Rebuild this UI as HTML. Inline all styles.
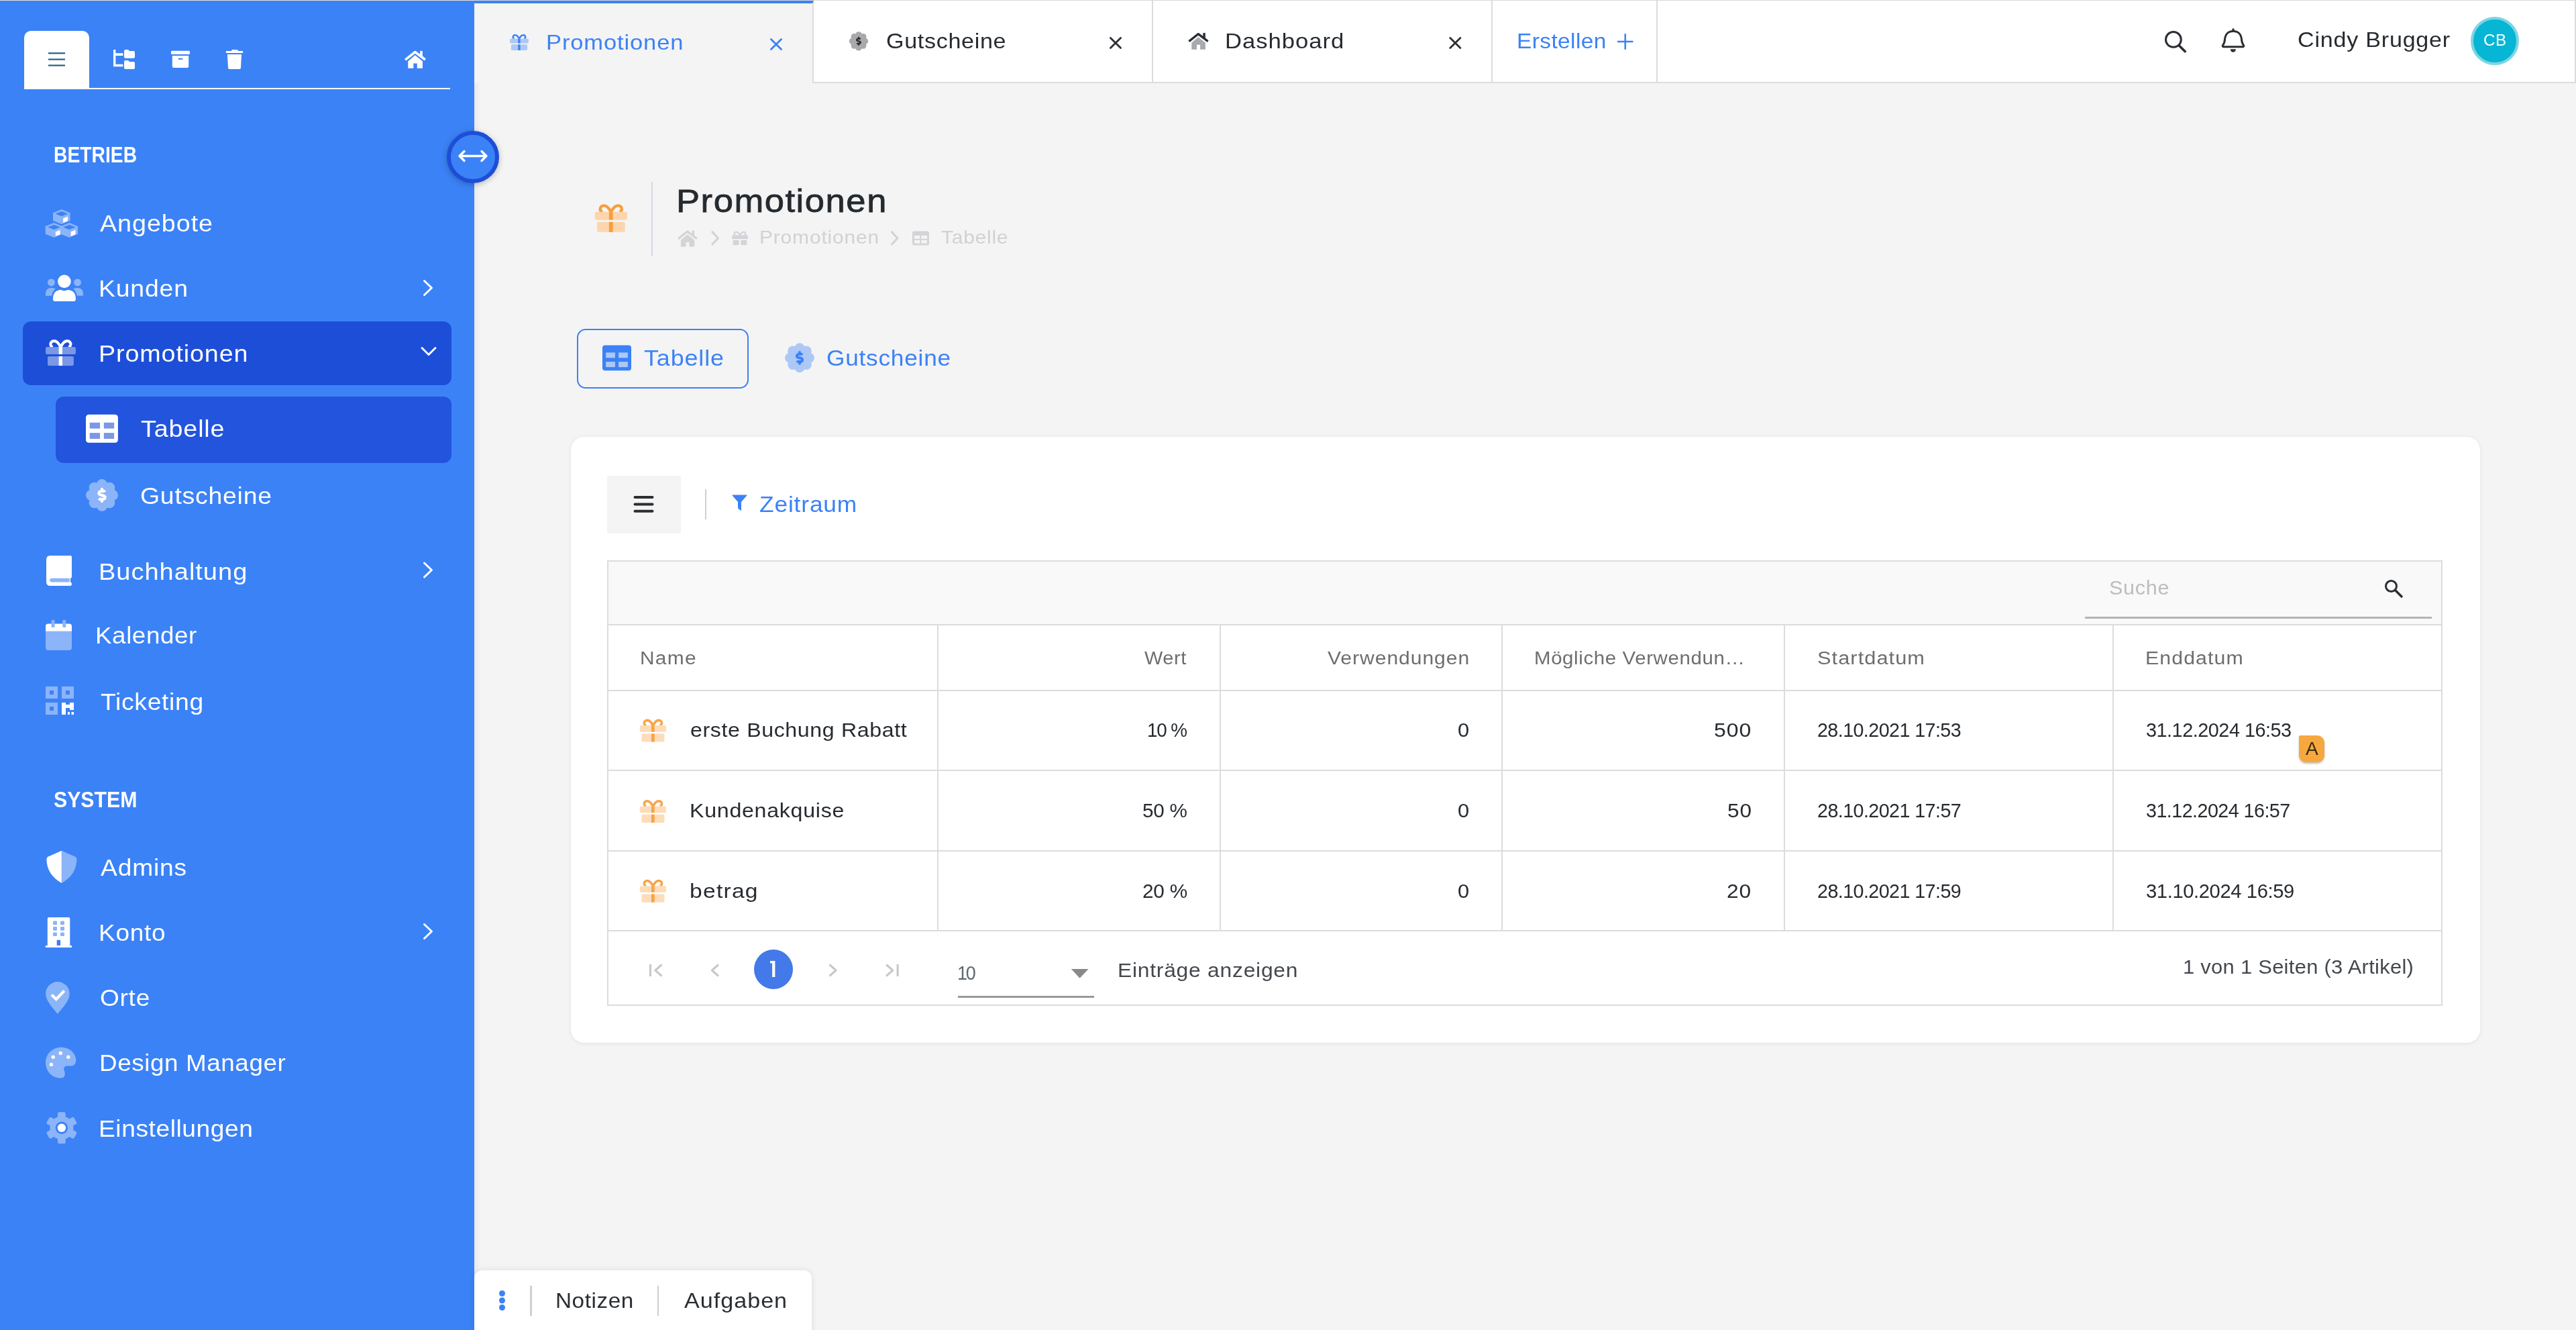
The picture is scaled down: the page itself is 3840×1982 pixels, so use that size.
<!DOCTYPE html><html><head><meta charset="utf-8"><style>
html,body{margin:0;padding:0}
body{width:3840px;height:1982px;overflow:hidden;position:relative;background:#f4f4f4;font-family:"Liberation Sans",sans-serif}
.t{position:absolute;white-space:nowrap;transform-origin:0 0}
svg{display:block}
</style></head><body>
<div style="position:absolute;left:0px;top:0px;width:707px;height:1982px;background:#3b82f6;box-shadow:2px 0 10px rgba(0,0,0,0.07)"></div>
<div style="position:absolute;left:0px;top:0px;width:3840px;height:1px;background:#e6e0d6"></div>
<div style="position:absolute;left:36px;top:46px;width:97px;height:87px;background:#fff;border-radius:10px 10px 0 0"></div>
<div style="position:absolute;left:36px;top:131px;width:635px;height:2px;background:#fff"></div>
<div style="position:absolute;left:34px;top:479px;width:639px;height:95px;background:#1d4ed8;border-radius:12px"></div>
<div style="position:absolute;left:83px;top:591px;width:590px;height:99px;background:#2254dd;border-radius:12px"></div>
<div class="t" style="left:79.67px;top:213.87px;font-size:33.00px;line-height:33.00px;letter-spacing:0.000px;transform:scaleX(0.8567);color:#fff;font-weight:700;">BETRIEB</div>
<div class="t" style="left:80.08px;top:1175.07px;font-size:33.00px;line-height:33.00px;letter-spacing:0.000px;transform:scaleX(0.9170);color:#fff;font-weight:700;">SYSTEM</div>
<div class="t" style="left:149.47px;top:315.02px;font-size:35.30px;line-height:35.30px;letter-spacing:0.897px;transform:scaleX(1.0673);color:#fff;font-weight:400;">Angebote</div>
<div class="t" style="left:147.16px;top:412.12px;font-size:35.30px;line-height:35.30px;letter-spacing:0.827px;transform:scaleX(1.0563);color:#fff;font-weight:400;">Kunden</div>
<div class="t" style="left:147.43px;top:508.72px;font-size:35.30px;line-height:35.30px;letter-spacing:0.822px;transform:scaleX(1.0676);color:#fff;font-weight:400;">Promotionen</div>
<div class="t" style="left:209.80px;top:621.12px;font-size:35.30px;line-height:35.30px;letter-spacing:0.781px;transform:scaleX(1.0687);color:#fff;font-weight:400;">Tabelle</div>
<div class="t" style="left:208.75px;top:720.82px;font-size:35.30px;line-height:35.30px;letter-spacing:0.722px;transform:scaleX(1.0590);color:#fff;font-weight:400;">Gutscheine</div>
<div class="t" style="left:147.40px;top:833.62px;font-size:35.30px;line-height:35.30px;letter-spacing:0.914px;transform:scaleX(1.0774);color:#fff;font-weight:400;">Buchhaltung</div>
<div class="t" style="left:141.60px;top:928.72px;font-size:35.30px;line-height:35.30px;letter-spacing:0.536px;transform:scaleX(1.0426);color:#fff;font-weight:400;">Kalender</div>
<div class="t" style="left:149.71px;top:1027.52px;font-size:35.30px;line-height:35.30px;letter-spacing:0.617px;transform:scaleX(1.0573);color:#fff;font-weight:400;">Ticketing</div>
<div class="t" style="left:150.37px;top:1275.12px;font-size:35.30px;line-height:35.30px;letter-spacing:0.788px;transform:scaleX(1.0536);color:#fff;font-weight:400;">Admins</div>
<div class="t" style="left:147.48px;top:1371.82px;font-size:35.30px;line-height:35.30px;letter-spacing:0.691px;transform:scaleX(1.0496);color:#fff;font-weight:400;">Konto</div>
<div class="t" style="left:148.79px;top:1468.82px;font-size:35.30px;line-height:35.30px;letter-spacing:0.689px;transform:scaleX(1.0498);color:#fff;font-weight:400;">Orte</div>
<div class="t" style="left:147.50px;top:1565.82px;font-size:35.30px;line-height:35.30px;letter-spacing:0.550px;transform:scaleX(1.0439);color:#fff;font-weight:400;">Design Manager</div>
<div class="t" style="left:147.48px;top:1663.62px;font-size:35.30px;line-height:35.30px;letter-spacing:0.561px;transform:scaleX(1.0514);color:#fff;font-weight:400;">Einstellungen</div>
<div style="position:absolute;left:707px;top:0px;width:3133px;height:124px;background:#fff;box-sizing:border-box;border-top:1px solid #d9d9d9;border-bottom:2px solid #dcdcdc;border-right:2px solid #dcdcdc"></div>
<div style="position:absolute;left:707px;top:1px;width:506px;height:123px;background:#f4f4f4;box-sizing:border-box;border-top:4px solid #3b82f6;border-right:2px solid #dcdcdc"></div>
<div style="position:absolute;left:1717px;top:0px;width:2px;height:124px;background:#dcdcdc"></div>
<div style="position:absolute;left:2223px;top:0px;width:2px;height:124px;background:#dcdcdc"></div>
<div style="position:absolute;left:2469px;top:0px;width:2px;height:124px;background:#dcdcdc"></div>
<div class="t" style="left:813.98px;top:46.54px;font-size:32.20px;line-height:32.20px;letter-spacing:0.805px;transform:scaleX(1.0727);color:#3b82f6;font-weight:400;">Promotionen</div>
<div class="t" style="left:1320.58px;top:44.74px;font-size:32.20px;line-height:32.20px;letter-spacing:0.654px;transform:scaleX(1.0584);color:#272b30;font-weight:400;">Gutscheine</div>
<div class="t" style="left:1825.97px;top:44.54px;font-size:32.20px;line-height:32.20px;letter-spacing:0.909px;transform:scaleX(1.0767);color:#272b30;font-weight:400;">Dashboard</div>
<div class="t" style="left:2261.07px;top:44.54px;font-size:32.20px;line-height:32.20px;letter-spacing:0.382px;transform:scaleX(1.0395);color:#3b82f6;font-weight:400;">Erstellen</div>
<div class="t" style="left:3425.26px;top:43.78px;font-size:31.80px;line-height:31.80px;letter-spacing:0.739px;transform:scaleX(1.0710);color:#272b30;font-weight:400;">Cindy Brugger</div>
<div style="position:absolute;left:3683px;top:25px;width:72px;height:72px;background:#06b6d4;border-radius:50%;box-sizing:border-box;border:4px solid #7fd4e4"></div>
<div class="t" style="left:3702.02px;top:48.84px;font-size:23.70px;line-height:23.70px;letter-spacing:0.469px;transform:scaleX(1.0236);color:#fff;font-weight:400;">CB</div>
<div style="position:absolute;left:971px;top:271px;width:2px;height:111px;background:#d3dae3"></div>
<div class="t" style="left:1007.66px;top:274.93px;font-size:48.40px;line-height:48.40px;letter-spacing:1.413px;transform:scaleX(1.0862);color:#252a2f;font-weight:400;-webkit-text-stroke:0.8px #252a2f;">Promotionen</div>
<div class="t" style="left:1132.27px;top:340.37px;font-size:27.80px;line-height:27.80px;letter-spacing:0.750px;transform:scaleX(1.0793);color:#d1d1d6;font-weight:400;">Promotionen</div>
<div class="t" style="left:1403.13px;top:340.37px;font-size:27.80px;line-height:27.80px;letter-spacing:0.697px;transform:scaleX(1.0785);color:#d1d1d6;font-weight:400;">Tabelle</div>
<div style="position:absolute;left:860px;top:490px;width:256px;height:89px;box-sizing:border-box;border:2px solid #3b82f6;border-radius:13px"></div>
<div class="t" style="left:959.59px;top:516.60px;font-size:33.20px;line-height:33.20px;letter-spacing:0.844px;transform:scaleX(1.0796);color:#3b82f6;font-weight:400;">Tabelle</div>
<div class="t" style="left:1232.07px;top:516.60px;font-size:33.20px;line-height:33.20px;letter-spacing:0.715px;transform:scaleX(1.0620);color:#3b82f6;font-weight:400;">Gutscheine</div>
<div style="position:absolute;left:851px;top:651px;width:2846px;height:903px;background:#fff;border-radius:20px;box-shadow:0 1px 6px rgba(0,0,0,0.08)"></div>
<div style="position:absolute;left:905px;top:709px;width:110px;height:86px;background:#f4f4f4"></div>
<div style="position:absolute;left:1051px;top:729px;width:2px;height:45px;background:#cfcfcf"></div>
<div class="t" style="left:1131.93px;top:734.77px;font-size:33.00px;line-height:33.00px;letter-spacing:0.794px;transform:scaleX(1.0702);color:#3b82f6;font-weight:400;">Zeitraum</div>
<div style="position:absolute;left:905px;top:835px;width:2736px;height:664px;box-sizing:border-box;border:2px solid #dcdcdc"></div>
<div style="position:absolute;left:907px;top:837px;width:2732px;height:95px;background:#f9f9f9"></div>
<div style="position:absolute;left:907px;top:930px;width:2732px;height:2px;background:#dcdcdc"></div>
<div style="position:absolute;left:3108px;top:919px;width:517px;height:3px;background:#b5b5b5"></div>
<div class="t" style="left:3144.35px;top:862.05px;font-size:29.00px;line-height:29.00px;letter-spacing:0.672px;transform:scaleX(1.0533);color:#bdbdbd;font-weight:400;">Suche</div>
<div style="position:absolute;left:1397px;top:932px;width:2px;height:455px;background:#dcdcdc"></div>
<div style="position:absolute;left:1818px;top:932px;width:2px;height:455px;background:#dcdcdc"></div>
<div style="position:absolute;left:2238px;top:932px;width:2px;height:455px;background:#dcdcdc"></div>
<div style="position:absolute;left:2659px;top:932px;width:2px;height:455px;background:#dcdcdc"></div>
<div style="position:absolute;left:3149px;top:932px;width:2px;height:455px;background:#dcdcdc"></div>
<div style="position:absolute;left:907px;top:1028px;width:2732px;height:2px;background:#dcdcdc"></div>
<div style="position:absolute;left:907px;top:1147px;width:2732px;height:2px;background:#dcdcdc"></div>
<div style="position:absolute;left:907px;top:1267px;width:2732px;height:2px;background:#dcdcdc"></div>
<div style="position:absolute;left:907px;top:1386px;width:2732px;height:2px;background:#dcdcdc"></div>
<div class="t" style="left:953.97px;top:967.45px;font-size:27.70px;line-height:27.70px;letter-spacing:1.169px;transform:scaleX(1.0805);color:#6e6e6e;font-weight:400;">Name</div>
<div class="t" style="left:1706.17px;top:967.45px;font-size:27.70px;line-height:27.70px;letter-spacing:0.543px;transform:scaleX(1.0442);color:#6e6e6e;font-weight:400;">Wert</div>
<div class="t" style="left:1979.26px;top:967.45px;font-size:27.70px;line-height:27.70px;letter-spacing:0.882px;transform:scaleX(1.0863);color:#6e6e6e;font-weight:400;">Verwendungen</div>
<div class="t" style="left:2286.81px;top:967.45px;font-size:27.70px;line-height:27.70px;letter-spacing:0.601px;transform:scaleX(1.0617);color:#6e6e6e;font-weight:400;">Mögliche Verwendun…</div>
<div class="t" style="left:2708.81px;top:967.45px;font-size:27.70px;line-height:27.70px;letter-spacing:0.969px;transform:scaleX(1.1094);color:#6e6e6e;font-weight:400;">Startdatum</div>
<div class="t" style="left:3198.34px;top:967.45px;font-size:27.70px;line-height:27.70px;letter-spacing:0.999px;transform:scaleX(1.0938);color:#6e6e6e;font-weight:400;">Enddatum</div>
<div class="t" style="left:1029.27px;top:1073.34px;font-size:30.20px;line-height:30.20px;letter-spacing:0.607px;transform:scaleX(1.0631);color:#272b30;font-weight:400;">erste Buchung Rabatt</div>
<div class="t" style="left:1709.72px;top:1073.34px;font-size:30.20px;line-height:30.20px;letter-spacing:-1.217px;transform:scaleX(0.9230);color:#272b30;font-weight:400;">10 %</div>
<div class="t" style="left:2172.85px;top:1073.34px;font-size:30.20px;line-height:30.20px;letter-spacing:0.000px;transform:scaleX(1.0207);color:#272b30;font-weight:400;">0</div>
<div class="t" style="left:2555.48px;top:1073.34px;font-size:30.20px;line-height:30.20px;letter-spacing:0.888px;transform:scaleX(1.0587);color:#272b30;font-weight:400;">500</div>
<div class="t" style="left:2708.78px;top:1073.34px;font-size:30.20px;line-height:30.20px;letter-spacing:-0.572px;transform:scaleX(0.9476);color:#272b30;font-weight:400;">28.10.2021 17:53</div>
<div class="t" style="left:3199.23px;top:1073.34px;font-size:30.20px;line-height:30.20px;letter-spacing:-0.497px;transform:scaleX(0.9542);color:#272b30;font-weight:400;">31.12.2024 16:53</div>
<div class="t" style="left:1027.94px;top:1193.04px;font-size:30.20px;line-height:30.20px;letter-spacing:0.690px;transform:scaleX(1.0646);color:#272b30;font-weight:400;">Kundenakquise</div>
<div class="t" style="left:1703.07px;top:1193.04px;font-size:30.20px;line-height:30.20px;letter-spacing:-0.261px;transform:scaleX(0.9827);color:#272b30;font-weight:400;">50 %</div>
<div class="t" style="left:2172.85px;top:1193.04px;font-size:30.20px;line-height:30.20px;letter-spacing:0.000px;transform:scaleX(1.0207);color:#272b30;font-weight:400;">0</div>
<div class="t" style="left:2574.70px;top:1193.04px;font-size:30.20px;line-height:30.20px;letter-spacing:0.863px;transform:scaleX(1.0432);color:#272b30;font-weight:400;">50</div>
<div class="t" style="left:2708.78px;top:1193.04px;font-size:30.20px;line-height:30.20px;letter-spacing:-0.568px;transform:scaleX(0.9479);color:#272b30;font-weight:400;">28.10.2021 17:57</div>
<div class="t" style="left:3199.23px;top:1193.04px;font-size:30.20px;line-height:30.20px;letter-spacing:-0.553px;transform:scaleX(0.9493);color:#272b30;font-weight:400;">31.12.2024 16:57</div>
<div class="t" style="left:1028.37px;top:1312.64px;font-size:30.20px;line-height:30.20px;letter-spacing:1.115px;transform:scaleX(1.1138);color:#272b30;font-weight:400;">betrag</div>
<div class="t" style="left:1702.82px;top:1312.64px;font-size:30.20px;line-height:30.20px;letter-spacing:-0.227px;transform:scaleX(0.9849);color:#272b30;font-weight:400;">20 %</div>
<div class="t" style="left:2172.85px;top:1312.64px;font-size:30.20px;line-height:30.20px;letter-spacing:0.000px;transform:scaleX(1.0207);color:#272b30;font-weight:400;">0</div>
<div class="t" style="left:2574.43px;top:1312.64px;font-size:30.20px;line-height:30.20px;letter-spacing:0.954px;transform:scaleX(1.0484);color:#272b30;font-weight:400;">20</div>
<div class="t" style="left:2708.78px;top:1312.64px;font-size:30.20px;line-height:30.20px;letter-spacing:-0.568px;transform:scaleX(0.9479);color:#272b30;font-weight:400;">28.10.2021 17:59</div>
<div class="t" style="left:3199.21px;top:1312.64px;font-size:30.20px;line-height:30.20px;letter-spacing:-0.378px;transform:scaleX(0.9648);color:#272b30;font-weight:400;">31.10.2024 16:59</div>
<div style="position:absolute;left:3427px;top:1096px;width:38px;height:40px;background:#f6a83f;border-radius:2px 11px 11px 11px;box-shadow:0 2px 3px rgba(0,0,0,0.25)"></div>
<div class="t" style="left:3436.57px;top:1102.00px;font-size:28.00px;line-height:28.00px;letter-spacing:0.000px;transform:scaleX(1.0032);color:#3a2a10;font-weight:400;">A</div>
<div style="position:absolute;left:1124px;top:1415px;width:58px;height:59px;background:#4479e9;border-radius:50%"></div>
<div style="position:absolute;left:1428px;top:1484px;width:203px;height:3px;background:#9a9a9a"></div>
<div class="t" style="left:1426.99px;top:1435.14px;font-size:30.20px;line-height:30.20px;letter-spacing:-2.444px;transform:scaleX(0.8919);color:#5f6870;font-weight:400;">10</div>
<div class="t" style="left:1666.14px;top:1430.93px;font-size:29.50px;line-height:29.50px;letter-spacing:0.703px;transform:scaleX(1.0779);color:#44484d;font-weight:400;">Einträge anzeigen</div>
<div class="t" style="left:3254.47px;top:1426.37px;font-size:29.80px;line-height:29.80px;letter-spacing:0.295px;transform:scaleX(1.0358);color:#44484d;font-weight:400;">1 von 1 Seiten (3 Artikel)</div>
<div style="position:absolute;left:707px;top:1893px;width:503px;height:120px;background:#fff;border-radius:12px;box-shadow:0 0 10px rgba(0,0,0,0.1)"></div>
<div style="position:absolute;left:790px;top:1916px;width:3px;height:45px;background:#cfcfcf"></div>
<div style="position:absolute;left:980px;top:1916px;width:2px;height:45px;background:#cfcfcf"></div>
<div class="t" style="left:828.24px;top:1922.95px;font-size:31.60px;line-height:31.60px;letter-spacing:0.570px;transform:scaleX(1.0527);color:#2a2e33;font-weight:400;">Notizen</div>
<div class="t" style="left:1020.47px;top:1922.95px;font-size:31.60px;line-height:31.60px;letter-spacing:0.934px;transform:scaleX(1.0795);color:#2a2e33;font-weight:400;">Aufgaben</div>
<svg style="position:absolute;left:0;top:0" width="3840" height="1982" viewBox="0 0 3840 1982">
<line x1="72" y1="79.3" x2="97" y2="79.3" stroke="#1f6381" stroke-width="2.2"/>
<line x1="72" y1="88.5" x2="97" y2="88.5" stroke="#1f6381" stroke-width="2.2"/>
<line x1="72" y1="97.5" x2="97" y2="97.5" stroke="#1f6381" stroke-width="2.2"/>
<path d="M169,74 h3.4 v5.2 h11 v3.7 h-11 v12.9 h11 v3.5 h-14.4 Z" fill="#fff"/>
<path d="M185,76 q0,-2 2,-2 h4 l2,2 h6 q2,0 2,2 v6.7 q0,2 -2,2 h-12 q-2,0 -2,-2 Z" fill="#fff"/>
<path d="M185,92 q0,-2 2,-2 h4 l2,2 h6 q2,0 2,2 v6.9 q0,2 -2,2 h-12 q-2,0 -2,-2 Z" fill="#fff"/>
<rect x="255" y="75.8" width="28" height="5.2" rx="1.2" fill="#fff"/>
<path d="M256.8,83 h24.4 v16 q0,2 -2,2 h-20.4 q-2,0 -2,-2 Z" fill="#fff"/>
<rect x="265.5" y="86.8" width="7" height="1.9" rx="0.9" fill="#3b82f6"/>
<path d="M337,76 h7.9 l1,-2 h8.2 l1,2 h7 v3.1 h-25.1 Z" fill="#fff"/>
<path d="M338.9,81 h21.1 l-1,20 q-0.1,2 -2,2 h-15 q-1.9,0 -2,-2 Z" fill="#fff"/>
<g transform="translate(603.00,75.90) scale(0.3200)"><path d="M16.4,48 L49.3,20 L84.2,48 L84.2,81 L58.6,81 L58.6,58.2 L41.8,58.2 L41.8,81 L16.4,81 Z" fill="#fff"/><path d="M3.5,41 L49.3,5 L96.5,41" fill="none" stroke="#fff" stroke-width="11" stroke-linejoin="round"/><rect x="72.4" y="0" width="11.5" height="26" fill="#fff"/></g>
<circle cx="705" cy="234" r="36" fill="#3b82f6" stroke="#1d4ed8" stroke-width="6" style="filter:drop-shadow(0 2px 4px rgba(0,0,0,0.25))"/>
<path d="M686,232.5 h38 M692,225.5 l-7,7 l7,7 M718,225.5 l7,7 l-7,7" fill="none" stroke="#fff" stroke-width="3.4" stroke-linecap="round" stroke-linejoin="round"/>
<path d="M91.8,312 L104.6,317.3 L104.6,328.7 L91.8,334 L79.0,328.7 L79.0,317.3 Z" fill="#8cb4f8" stroke="#8cb4f8" stroke-width="0" /><path d="M91.8,315 L101.1,318.6 L91.8,322.3 L82.5,318.6 Z" fill="#3b82f6"/><path d="M94.1,325.4 L101.0,322.6 L101.0,329.2 L94.1,332 Z" fill="#fff"/><path d="M80.5,332 L93.3,337.3 L93.3,348.7 L80.5,354 L67.7,348.7 L67.7,337.3 Z" fill="#8cb4f8" stroke="#8cb4f8" stroke-width="0" /><path d="M80.5,335 L89.8,338.6 L80.5,342.3 L71.2,338.6 Z" fill="#3b82f6"/><path d="M82.8,345.4 L89.7,342.6 L89.7,349.2 L82.8,352 Z" fill="#fff"/><path d="M103.3,332 L116.1,337.3 L116.1,348.7 L103.3,354 L90.5,348.7 L90.5,337.3 Z" fill="#8cb4f8" stroke="#8cb4f8" stroke-width="0" /><path d="M103.3,335 L112.6,338.6 L103.3,342.3 L94.0,338.6 Z" fill="#3b82f6"/><path d="M105.6,345.4 L112.5,342.6 L112.5,349.2 L105.6,352 Z" fill="#fff"/>
<circle cx="76.4" cy="420.9" r="5.5" fill="#8cb4f8"/><circle cx="115.5" cy="420.9" r="5.5" fill="#8cb4f8"/>
<path d="M68,440.7 v-3 q0,-8.7 8.7,-8.7 q3.5,0 6,1.2 q-4.5,3.8 -5.5,10.5 Z" fill="#8cb4f8"/>
<path d="M123.9,440.7 v-3 q0,-8.7 -8.7,-8.7 q-3.5,0 -6,1.2 q4.5,3.8 5.5,10.5 Z" fill="#8cb4f8"/>
<circle cx="95.9" cy="419.4" r="9.8" fill="#fff"/>
<path d="M79,446 q0,-14 12,-14 q2.5,1.2 4.9,1.2 q2.4,0 4.9,-1.2 q12.1,0 12.1,14 q0,3 -3,3 h-27.9 q-3,0 -3,-3 Z" fill="#fff"/>
<g transform="translate(68.00,505.90) scale(0.4490)"><path d="M49.9,25.5 C45,15 38,5 28,5 C20,5 16,11 16.5,17 C17,21 19.5,23.5 23,25.5 M49.9,25.5 C54.8,15 61.8,5 71.8,5 C79.8,5 83.8,11 83.3,17 C82.8,21 80.3,23.5 76.8,25.5" fill="none" stroke="#fff" stroke-width="9"/><rect x="0" y="24.7" width="100" height="24.5" rx="5" fill="#7b98e6"/><rect x="6.7" y="55.7" width="86.6" height="31.2" rx="5" fill="#7b98e6"/><rect x="43.8" y="24.7" width="11.8" height="24.5" fill="#fff"/><rect x="43.8" y="55.7" width="11.8" height="31.2" fill="#fff"/></g>
<path d="M632.5,418.5 L643.5,429 L632.5,439.5" fill="none" stroke="#fff" stroke-width="3" stroke-linecap="round" stroke-linejoin="round"/>
<path d="M632.5,839.0 L643.5,849.5 L632.5,860.0" fill="none" stroke="#fff" stroke-width="3" stroke-linecap="round" stroke-linejoin="round"/>
<path d="M632.5,1377.5 L643.5,1388 L632.5,1398.5" fill="none" stroke="#fff" stroke-width="3" stroke-linecap="round" stroke-linejoin="round"/>
<path d="M629,518.5 L639,528.5 L649,518.5" fill="none" stroke="#fff" stroke-width="3" stroke-linecap="round" stroke-linejoin="round"/>
<g transform="translate(128.00,617.80) scale(0.4790)"><rect x="0" y="0" width="100" height="87.5" rx="9" fill="#fff"/><rect x="12" y="25" width="32" height="18.5" fill="#7b97e6"/><rect x="12" y="57" width="32" height="18.5" fill="#7b97e6"/><rect x="56" y="25" width="32" height="18.5" fill="#7b97e6"/><rect x="56" y="57" width="32" height="18.5" fill="#7b97e6"/></g>
<g transform="translate(152.00,738.00) scale(0.4800)" fill="#8cb4f8"><circle cx="0" cy="0" r="37"/><circle cx="0.00" cy="-33.00" r="17"/><circle cx="23.33" cy="-23.33" r="17"/><circle cx="33.00" cy="0.00" r="17"/><circle cx="23.33" cy="23.33" r="17"/><circle cx="0.00" cy="33.00" r="17"/><circle cx="-23.33" cy="23.33" r="17"/><circle cx="-33.00" cy="0.00" r="17"/><circle cx="-23.33" cy="-23.33" r="17"/><path d="M9,-10 C6,-14.5 -9.5,-14.5 -9.5,-5.5 C-9.5,2 9.5,-2 9.5,6 C9.5,14.5 -5.5,14.5 -9.5,10" fill="none" stroke="#fff" stroke-width="9" stroke-linecap="butt"/><path d="M0,-19 L0,-14 M0,14 L0,19" fill="none" stroke="#fff" stroke-width="9" stroke-linecap="round"/></g>
<path d="M74,827.9 h31 q2,0 2,2 v29.5 q0,2 -2,2.4 v5.6 q2,0.3 2,2.8 q0,2.8 -2.8,2.8 h-29.2 q-6,0 -6,-6 v-33.1 q0,-6 6,-6 Z" fill="#fff"/>
<path d="M77,861.8 h26.8 v5.6 h-26.8 q-2.8,0 -2.8,-2.8 q0,-2.8 2.8,-2.8 Z" fill="#8cb4f8"/>
<path d="M68,940.7 h39 v24.3 q0,4 -4,4 h-31 q-4,0 -4,-4 Z" fill="#8cb4f8"/>
<path d="M72,929.5 h31 q4,0 4,4 v7.2 h-39 v-7.2 q0,-4 4,-4 Z" fill="#fff"/>
<rect x="76.6" y="923.8" width="5" height="11.2" rx="1.5" fill="#8cb4f8"/><rect x="93.3" y="923.8" width="5" height="11.2" rx="1.5" fill="#8cb4f8"/>
<path d="M68,1023 h18 v18 h-18 Z M74,1029 v6 h6 v-6 Z" fill="#8cb4f8" fill-rule="evenodd"/>
<path d="M92,1023 h18 v18 h-18 Z M98,1029 v6 h6 v-6 Z" fill="#8cb4f8" fill-rule="evenodd"/>
<path d="M68,1047 h18 v18 h-18 Z M74,1053 v6 h6 v-6 Z" fill="#8cb4f8" fill-rule="evenodd"/>
<path d="M92,1047 h6 v3 h6 v-3 h6 v11 h-6 v-3 h-6 v10 h-6 Z" fill="#fff"/>
<rect x="101" y="1061" width="3" height="4" fill="#fff"/><rect x="106.5" y="1061" width="3.5" height="4" fill="#fff"/>
<path d="M91.9,1267.8 L72,1276.5 q-2.6,1.2 -2.6,4 q0.3,23 22.5,35.5 Z" fill="#fff"/>
<path d="M91.9,1267.8 L111.8,1276.5 q2.6,1.2 2.6,4 q-0.3,23 -22.5,35.5 Z" fill="#8cb4f8"/>
<path d="M72.8,1366.9 h29.5 q2,0 2,2 v40.1 h2.7 v2.9 h-39.2 v-2.9 h3 v-40.1 q0,-2 2,-2 Z" fill="#fff"/>
<rect x="79" y="1372.5" width="6" height="5.7" rx="1.3" fill="#8cb4f8"/>
<rect x="79" y="1381" width="6" height="5.7" rx="1.3" fill="#8cb4f8"/>
<rect x="79" y="1389.4" width="6" height="5.7" rx="1.3" fill="#8cb4f8"/>
<rect x="90" y="1372.5" width="6" height="5.7" rx="1.3" fill="#8cb4f8"/>
<rect x="90" y="1381" width="6" height="5.7" rx="1.3" fill="#8cb4f8"/>
<rect x="90" y="1389.4" width="6" height="5.7" rx="1.3" fill="#8cb4f8"/>
<rect x="84.7" y="1400.8" width="5.4" height="8.2" fill="#3b82f6"/>
<path d="M85.9,1511 C80,1503 68.1,1492 68.1,1480.9 A17.8,17.8 0 0 1 103.7,1480.9 C103.7,1492 91.8,1503 85.9,1511 Z" fill="#8cb4f8"/>
<path d="M77,1482.5 L83.8,1489 L95.8,1476.5" fill="none" stroke="#fff" stroke-width="4.2"/>
<path d="M91,1560.8 C104,1560.8 113.3,1570 113.3,1580 C113.3,1586 110,1588.5 105,1588.5 L100,1588.5 C96.5,1588.5 94.5,1591 95.5,1594.5 C96.3,1597 96.8,1599 96.8,1601 C96.8,1604.5 94,1606.5 90.5,1606.5 C77,1606.5 68,1596 68,1583.5 C68,1571 78,1560.8 91,1560.8 Z" fill="#8cb4f8"/>
<circle cx="79.2" cy="1575.2" r="2.7" fill="#fff"/>
<circle cx="90.3" cy="1569.5" r="2.7" fill="#fff"/>
<circle cx="101.8" cy="1575.2" r="2.7" fill="#fff"/>
<circle cx="76.5" cy="1586.4" r="2.7" fill="#fff"/>
<g transform="translate(91.9,1680.8)" fill="#8cb4f8"><circle r="17.5"/><rect x="-5.8" y="-23.5" width="11.6" height="12" rx="2.5" transform="rotate(0)"/><rect x="-5.8" y="-23.5" width="11.6" height="12" rx="2.5" transform="rotate(60)"/><rect x="-5.8" y="-23.5" width="11.6" height="12" rx="2.5" transform="rotate(120)"/><rect x="-5.8" y="-23.5" width="11.6" height="12" rx="2.5" transform="rotate(180)"/><rect x="-5.8" y="-23.5" width="11.6" height="12" rx="2.5" transform="rotate(240)"/><rect x="-5.8" y="-23.5" width="11.6" height="12" rx="2.5" transform="rotate(300)"/></g>
<circle cx="91.9" cy="1680.8" r="9.2" fill="#3b82f6"/><circle cx="91.9" cy="1680.8" r="6.2" fill="#fff"/>
<g transform="translate(760.10,50.80) scale(0.2780)"><path d="M49.9,25.5 C45,15 38,5 28,5 C20,5 16,11 16.5,17 C17,21 19.5,23.5 23,25.5 M49.9,25.5 C54.8,15 61.8,5 71.8,5 C79.8,5 83.8,11 83.3,17 C82.8,21 80.3,23.5 76.8,25.5" fill="none" stroke="#3b82f6" stroke-width="9"/><rect x="0" y="24.7" width="100" height="24.5" rx="5" fill="#adc8f5"/><rect x="6.7" y="55.7" width="86.6" height="31.2" rx="5" fill="#adc8f5"/><rect x="43.8" y="24.7" width="11.8" height="24.5" fill="#3b82f6"/><rect x="43.8" y="55.7" width="11.8" height="31.2" fill="#3b82f6"/></g>
<g transform="translate(1280.00,61.40) scale(0.2840)" fill="#a9a9ab"><circle cx="0" cy="0" r="37"/><circle cx="0.00" cy="-33.00" r="17"/><circle cx="23.33" cy="-23.33" r="17"/><circle cx="33.00" cy="0.00" r="17"/><circle cx="23.33" cy="23.33" r="17"/><circle cx="0.00" cy="33.00" r="17"/><circle cx="-23.33" cy="23.33" r="17"/><circle cx="-33.00" cy="0.00" r="17"/><circle cx="-23.33" cy="-23.33" r="17"/><path d="M9,-10 C6,-14.5 -9.5,-14.5 -9.5,-5.5 C-9.5,2 9.5,-2 9.5,6 C9.5,14.5 -5.5,14.5 -9.5,10" fill="none" stroke="#2b2f33" stroke-width="9" stroke-linecap="butt"/><path d="M0,-19 L0,-14 M0,14 L0,19" fill="none" stroke="#2b2f33" stroke-width="9" stroke-linecap="round"/></g>
<g transform="translate(1771.30,49.10) scale(0.3040)"><path d="M16.4,48 L49.3,20 L84.2,48 L84.2,81 L58.6,81 L58.6,58.2 L41.8,58.2 L41.8,81 L16.4,81 Z" fill="#a9aaad"/><path d="M3.5,41 L49.3,5 L96.5,41" fill="none" stroke="#2b2f33" stroke-width="11" stroke-linejoin="round"/><rect x="72.4" y="0" width="11.5" height="26" fill="#2b2f33"/></g>
<path d="M1149.4,58.4 L1164.6,73.6 M1164.6,58.4 L1149.4,73.6" stroke="#3b82f6" stroke-width="2.8" stroke-linecap="round"/>
<path d="M1655.4,56.4 L1670.6,71.6 M1670.6,56.4 L1655.4,71.6" stroke="#2b2f33" stroke-width="2.8" stroke-linecap="round"/>
<path d="M2161.7000000000003,56.4 L2176.9,71.6 M2176.9,56.4 L2161.7000000000003,71.6" stroke="#2b2f33" stroke-width="2.8" stroke-linecap="round"/>
<path d="M2411,62 h23.5 M2422.75,50.25 v23.5" stroke="#3b82f6" stroke-width="2.6"/>
<circle cx="3239.9" cy="58.9" r="11.4" fill="none" stroke="#2b2f33" stroke-width="3"/>
<path d="M3248.5,68 L3257,76.5" stroke="#2b2f33" stroke-width="3.6" stroke-linecap="square"/>
<path d="M3329,46.5 C3321,46.5 3317,52 3316.5,59 C3316,64 3315.5,65 3313.8,67 C3312.5,68.5 3313.5,69.8 3315,69.8 L3343,69.8 C3344.5,69.8 3345.5,68.5 3344.2,67 C3342.5,65 3342,64 3341.5,59 C3341,52 3337,46.5 3329,46.5 Z" fill="none" stroke="#2b2f33" stroke-width="3"/>
<rect x="3327.3" y="42.3" width="3.4" height="5" rx="1.7" fill="#2b2f33"/>
<path d="M3324.8,73.3 h8.1 a4.05,4.4 0 0 1 -8.1,0 Z" fill="#2b2f33"/>
<g transform="translate(886.70,303.90) scale(0.4830)"><path d="M49.9,25.5 C45,15 38,5 28,5 C20,5 16,11 16.5,17 C17,21 19.5,23.5 23,25.5 M49.9,25.5 C54.8,15 61.8,5 71.8,5 C79.8,5 83.8,11 83.3,17 C82.8,21 80.3,23.5 76.8,25.5" fill="none" stroke="#f89e3c" stroke-width="9"/><rect x="0" y="24.7" width="100" height="24.5" rx="5" fill="#fdd5ad"/><rect x="6.7" y="55.7" width="86.6" height="31.2" rx="5" fill="#fdd5ad"/><rect x="43.8" y="24.7" width="11.8" height="24.5" fill="#f89e3c"/><rect x="43.8" y="55.7" width="11.8" height="31.2" fill="#f89e3c"/></g>
<g transform="translate(1010.00,343.50) scale(0.2990)"><path d="M16.4,48 L49.3,20 L84.2,48 L84.2,81 L58.6,81 L58.6,58.2 L41.8,58.2 L41.8,81 L16.4,81 Z" fill="#d3d3d8"/><path d="M3.5,41 L49.3,5 L96.5,41" fill="none" stroke="#d3d3d8" stroke-width="11" stroke-linejoin="round"/><rect x="72.4" y="0" width="11.5" height="26" fill="#d3d3d8"/></g>
<path d="M1062,345.8 L1070.5,355 L1062,364" fill="none" stroke="#d3d3d8" stroke-width="3.2" stroke-linecap="round" stroke-linejoin="round"/>
<g transform="translate(1091.20,344.70) scale(0.2360)"><path d="M49.7,26 C45,14 37,4.8 27,4.8 C19,4.8 14.8,10.5 14.8,16.5 C14.8,20 15.5,23 16.5,26 M49.7,26 C54.4,14 62.4,4.8 72.4,4.8 C80.4,4.8 84.6,10.5 84.6,16.5 C84.6,20 83.9,23 82.9,26" fill="none" stroke="#d3d3d8" stroke-width="9.6"/><rect x="0" y="25" width="100" height="24" rx="3" fill="#d3d3d8"/><rect x="6.7" y="56" width="37" height="31" rx="3" fill="#d3d3d8"/><rect x="56" y="56" width="37.3" height="31" rx="3" fill="#d3d3d8"/></g>
<path d="M1329.5,345.8 L1338,355 L1329.5,364" fill="none" stroke="#d3d3d8" stroke-width="3.2" stroke-linecap="round" stroke-linejoin="round"/>
<rect x="1360" y="344.6" width="25" height="21" rx="3" fill="#d3d3d8"/>
<rect x="1363" y="351" width="8.5" height="4.8" fill="#f4f4f4"/><rect x="1373.5" y="351" width="8.5" height="4.8" fill="#f4f4f4"/>
<rect x="1363" y="357.8" width="8.5" height="4.8" fill="#f4f4f4"/><rect x="1373.5" y="357.8" width="8.5" height="4.8" fill="#f4f4f4"/>
<g transform="translate(898.00,514.60) scale(0.4300)"><rect x="0" y="0" width="100" height="87.5" rx="9" fill="#3b82f6"/><rect x="12" y="25" width="32" height="18.5" fill="#adc8f5"/><rect x="12" y="57" width="32" height="18.5" fill="#adc8f5"/><rect x="56" y="25" width="32" height="18.5" fill="#adc8f5"/><rect x="56" y="57" width="32" height="18.5" fill="#adc8f5"/></g>
<g transform="translate(1192.00,533.30) scale(0.4400)" fill="#adc8f5"><circle cx="0" cy="0" r="37"/><circle cx="0.00" cy="-33.00" r="17"/><circle cx="23.33" cy="-23.33" r="17"/><circle cx="33.00" cy="0.00" r="17"/><circle cx="23.33" cy="23.33" r="17"/><circle cx="0.00" cy="33.00" r="17"/><circle cx="-23.33" cy="23.33" r="17"/><circle cx="-33.00" cy="0.00" r="17"/><circle cx="-23.33" cy="-23.33" r="17"/><path d="M9,-10 C6,-14.5 -9.5,-14.5 -9.5,-5.5 C-9.5,2 9.5,-2 9.5,6 C9.5,14.5 -5.5,14.5 -9.5,10" fill="none" stroke="#3b82f6" stroke-width="9" stroke-linecap="butt"/><path d="M0,-19 L0,-14 M0,14 L0,19" fill="none" stroke="#3b82f6" stroke-width="9" stroke-linecap="round"/></g>
<line x1="946.5" y1="741" x2="972.5" y2="741" stroke="#2b2f33" stroke-width="4" stroke-linecap="round"/>
<line x1="946.5" y1="751.4" x2="972.5" y2="751.4" stroke="#2b2f33" stroke-width="4" stroke-linecap="round"/>
<line x1="946.5" y1="761.7" x2="972.5" y2="761.7" stroke="#2b2f33" stroke-width="4" stroke-linecap="round"/>
<path d="M1089.5,737.5 h23.5 q1,0 0.3,1 l-8.3,9.5 v12 q0,1.5 -1.3,0.5 l-3.7,-3 v-9.5 l-8.3,-9.5 q-0.7,-1 0.3,-1 Z" fill="#3b82f6"/>
<circle cx="3564.5" cy="873.5" r="8" fill="none" stroke="#2b2f33" stroke-width="3"/>
<path d="M3570.5,879.5 L3581,890" stroke="#2b2f33" stroke-width="3.6"/>
<g transform="translate(953.80,1071.40) scale(0.3930)"><path d="M49.9,25.5 C45,15 38,5 28,5 C20,5 16,11 16.5,17 C17,21 19.5,23.5 23,25.5 M49.9,25.5 C54.8,15 61.8,5 71.8,5 C79.8,5 83.8,11 83.3,17 C82.8,21 80.3,23.5 76.8,25.5" fill="none" stroke="#f8a448" stroke-width="9"/><rect x="0" y="24.7" width="100" height="24.5" rx="5" fill="#fddcba"/><rect x="6.7" y="55.7" width="86.6" height="31.2" rx="5" fill="#fddcba"/><rect x="43.8" y="24.7" width="11.8" height="24.5" fill="#f8a448"/><rect x="43.8" y="55.7" width="11.8" height="31.2" fill="#f8a448"/></g>
<g transform="translate(953.80,1191.80) scale(0.3930)"><path d="M49.9,25.5 C45,15 38,5 28,5 C20,5 16,11 16.5,17 C17,21 19.5,23.5 23,25.5 M49.9,25.5 C54.8,15 61.8,5 71.8,5 C79.8,5 83.8,11 83.3,17 C82.8,21 80.3,23.5 76.8,25.5" fill="none" stroke="#f8a448" stroke-width="9"/><rect x="0" y="24.7" width="100" height="24.5" rx="5" fill="#fddcba"/><rect x="6.7" y="55.7" width="86.6" height="31.2" rx="5" fill="#fddcba"/><rect x="43.8" y="24.7" width="11.8" height="24.5" fill="#f8a448"/><rect x="43.8" y="55.7" width="11.8" height="31.2" fill="#f8a448"/></g>
<g transform="translate(953.80,1310.50) scale(0.3930)"><path d="M49.9,25.5 C45,15 38,5 28,5 C20,5 16,11 16.5,17 C17,21 19.5,23.5 23,25.5 M49.9,25.5 C54.8,15 61.8,5 71.8,5 C79.8,5 83.8,11 83.3,17 C82.8,21 80.3,23.5 76.8,25.5" fill="none" stroke="#f8a448" stroke-width="9"/><rect x="0" y="24.7" width="100" height="24.5" rx="5" fill="#fddcba"/><rect x="6.7" y="55.7" width="86.6" height="31.2" rx="5" fill="#fddcba"/><rect x="43.8" y="24.7" width="11.8" height="24.5" fill="#f8a448"/><rect x="43.8" y="55.7" width="11.8" height="31.2" fill="#f8a448"/></g>
<rect x="967.9" y="1437" width="3.1" height="18" fill="#c8c8c8"/>
<path d="M986.5,1437.5 L976.8,1446 L986.5,1454.5" fill="none" stroke="#c8c8c8" stroke-width="3" stroke-linecap="butt" stroke-linejoin="round"/>
<path d="M1071,1437.5 L1061.3,1446 L1071,1454.5" fill="none" stroke="#c8c8c8" stroke-width="3" stroke-linecap="butt" stroke-linejoin="round"/>
<path d="M1236.5,1437.5 L1246.2,1446 L1236.5,1454.5" fill="none" stroke="#c8c8c8" stroke-width="3" stroke-linecap="butt" stroke-linejoin="round"/>
<path d="M1321.1,1437.5 L1330.8,1446 L1321.1,1454.5" fill="none" stroke="#c8c8c8" stroke-width="3" stroke-linecap="butt" stroke-linejoin="round"/>
<rect x="1336.6" y="1437" width="3.1" height="18" fill="#c8c8c8"/>
<path d="M1596.8,1444 h25.7 l-12.85,13.7 Z" fill="#8a8a8a"/>
<path d="M1148,1432 h7.4 v23.9 h-4.3 v-20.3 h-3.1 Z" fill="#fff"/>
<circle cx="748.5" cy="1927.5" r="4.5" fill="#3b82f6"/>
<circle cx="748.5" cy="1938" r="4.5" fill="#3b82f6"/>
<circle cx="748.5" cy="1948.5" r="4.5" fill="#3b82f6"/>
</svg>
</body></html>
